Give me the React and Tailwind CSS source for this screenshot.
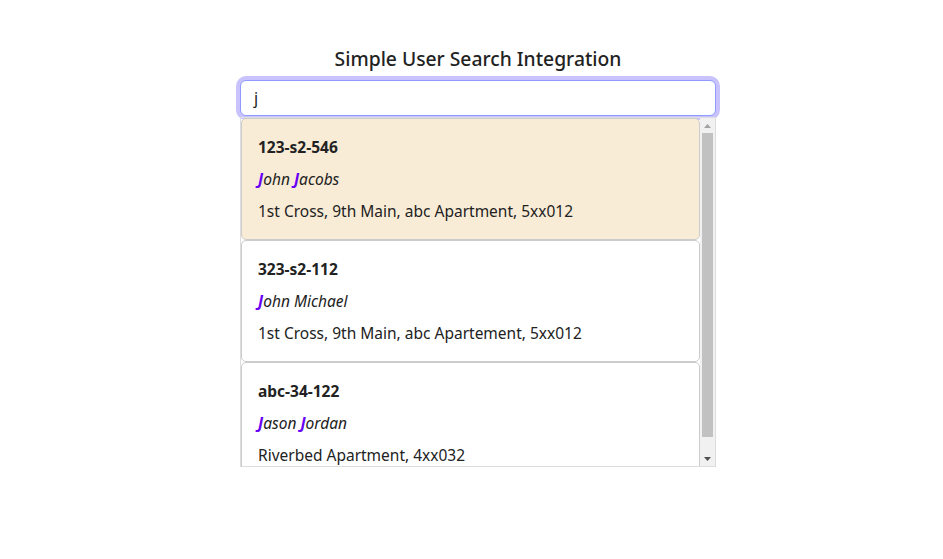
import React from "react";

const users = [
  { id: "123-s2-546", name: ["J", "ohn ", "J", "acobs"], addr: "1st Cross, 9th Main, abc Apartment, 5xx012", active: true },
  { id: "323-s2-112", name: ["J", "ohn Michael"], addr: "1st Cross, 9th Main, abc Apartement, 5xx012" },
  { id: "abc-34-122", name: ["J", "ason ", "J", "ordan"], addr: "Riverbed Apartment, 4xx032" },
];

function Name({ parts }) {
  return (
    <span className="italic">
      {parts.map((p, i) =>
        p === "J" ? (
          <span key={i} className="font-bold text-[#6a00f4]">J</span>
        ) : (
          <span key={i}>{p}</span>
        )
      )}
    </span>
  );
}

function Scrollbar() {
  return (
    <div className="flex w-[15px] shrink-0 flex-col bg-[#f1f1f1]">
      <div className="flex h-[15px] items-center justify-center">
        <svg width="7" height="4" viewBox="0 0 7 4"><path d="M3.5 0L7 4H0z" fill="#a3a3a3" /></svg>
      </div>
      <div className="flex-1 px-[2px]">
        <div className="h-[304px] bg-[#c1c1c1]" />
      </div>
      <div className="flex h-[15px] items-center justify-center">
        <svg width="7" height="4" viewBox="0 0 7 4"><path d="M0 0H7L3.5 4z" fill="#505050" /></svg>
      </div>
    </div>
  );
}

export default function App() {
  return (
    <div className="min-h-[559px] bg-white text-[#222] font-['Noto_Sans',sans-serif]">
      <div className="ml-[240px] w-[476px] pt-[46px]">
        <h1 className="text-center text-[19.3px] leading-[26px] font-medium text-[#222]">Simple User Search Integration</h1>
        <div className="mt-[8px] h-[36px] rounded-[6px] border border-[#8e9bff] ring-[4px] ring-[#c9c3fd] bg-white flex items-center px-[13px] text-[16px]">
          j
        </div>
        <div className="relative mt-[1px] flex h-[350px] border border-[#ddd]">
          <div className="min-w-0 flex-1 overflow-hidden">
            {users.map((u) => (
              <div
                key={u.id}
                className={
                  "flex flex-col gap-[8px] rounded-[5px] border border-[#ccc] p-[16px] text-[15.5px] leading-[24px] " +
                  (u.active ? "bg-[#f9ecd7]" : "bg-white")
                }
              >
                <div className="font-bold">{u.id}</div>
                <div><Name parts={u.name} /></div>
                <div className="whitespace-nowrap">{u.addr}</div>
              </div>
            ))}
          </div>
          <Scrollbar />
        </div>
      </div>
    </div>
  );
}
